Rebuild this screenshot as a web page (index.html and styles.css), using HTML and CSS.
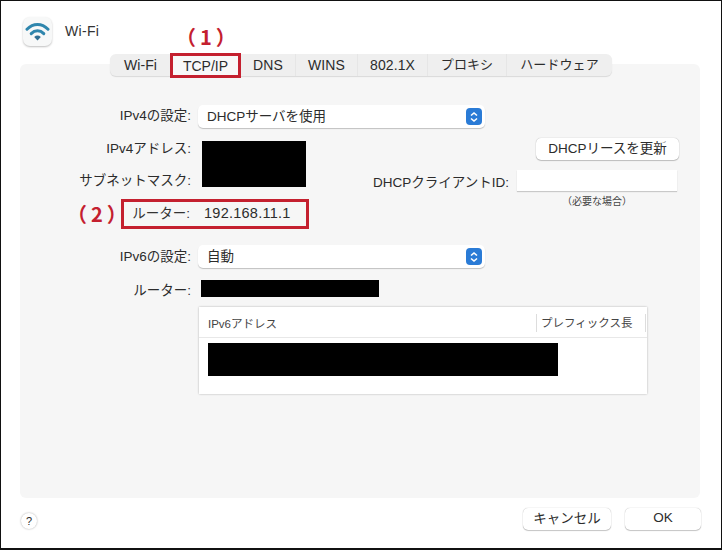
FILE: index.html
```html
<!DOCTYPE html>
<html lang="ja">
<head>
<meta charset="utf-8">
<title>Wi-Fi</title>
<link rel="stylesheet" href="styles.css">
</head>
<body>
<div class="window">
  <header class="header">
    <div class="app-icon">
      <svg width="25" height="21" viewBox="0 0 25 21" fill="none">
        <path d="M2 8.2C8.2 1.9 16.8 1.9 23 8.2" stroke="#2f86ad" stroke-width="3" stroke-linecap="round"/>
        <path d="M6.2 12.6C9.9 8.9 15.1 8.9 18.8 12.6" stroke="#2f86ad" stroke-width="3" stroke-linecap="round"/>
        <path d="M9.2 16C11.2 14.1 13.8 14.1 15.8 16L12.5 19.4Z" fill="#2f6f94"/>
      </svg>
    </div>
    <div class="title">Wi-Fi</div>
  </header>

  <nav class="tabs">
    <div class="tab tab-wifi">Wi-Fi</div>
    <div class="tab tab-active">TCP/IP<span class="note note-one">（1）</span></div>
    <div class="tab">DNS</div>
    <div class="tab">WINS</div>
    <div class="tab">802.1X</div>
    <div class="tab tab-cjk">プロキシ</div>
    <div class="tab tab-cjk tab-last">ハードウェア</div>
  </nav>

  <main class="panel">
    <div class="row row-v4">
      <div class="label">IPv4の設定:</div>
      <div class="select"><span class="select-text">DHCPサーバを使用</span><span class="stepper"><svg width="10" height="12" viewBox="0 0 10 12" fill="none"><path d="M2 4.5 5 2l3 2.5M2 7.5 5 10l3-2.5" stroke="#fff" stroke-width="1.6"/></svg></span></div>
    </div>

    <div class="v4-detail">
      <div class="v4-left">
        <div class="masked">
          <div class="masked-labels">
            <div class="label">IPv4アドレス:</div>
            <div class="label">サブネットマスク:</div>
          </div>
          <div class="redact redact-v4"></div>
        </div>
        <div class="router-box">
          <span class="note note-two">（2）</span>
          <div class="router-label">ルーター:</div>
          <div class="router-value">192.168.11.1</div>
        </div>
      </div>
      <div class="v4-right">
        <div class="button button-lease">DHCPリースを更新</div>
        <div class="client-row">
          <div class="client-label">DHCPクライアントID:</div>
          <div class="client-field"></div>
        </div>
        <div class="hint">（必要な場合）</div>
      </div>
    </div>

    <div class="row row-v6">
      <div class="label">IPv6の設定:</div>
      <div class="select"><span class="select-text">自動</span><span class="stepper"><svg width="10" height="12" viewBox="0 0 10 12" fill="none"><path d="M2 4.5 5 2l3 2.5M2 7.5 5 10l3-2.5" stroke="#fff" stroke-width="1.6"/></svg></span></div>
    </div>

    <div class="row row-router6">
      <div class="label">ルーター:</div>
      <div class="redact redact-router"></div>
    </div>

    <div class="table">
      <div class="table-head">
        <div class="col-address">IPv6アドレス</div>
        <div class="col-prefix">プレフィックス長</div>
      </div>
      <div class="redact redact-table"></div>
    </div>
  </main>

  <footer class="footer">
    <div class="help">?</div>
    <div class="footer-buttons">
      <div class="button button-cancel">キャンセル</div>
      <div class="button button-ok">OK</div>
    </div>
  </footer>
</div>
</body>
</html>
```
FILE: styles.css
```css
* { box-sizing: border-box; }
html, body { margin: 0; padding: 0; }
body {
  width: 722px;
  height: 550px;
  background: #fff;
  font-family: "Liberation Sans", "Noto Sans CJK JP", sans-serif;
  font-size: 13px;
  color: #2c2c2c;
}
.window {
  width: 722px;
  height: 550px;
  border: 1px solid #111;
  border-bottom-width: 2px;
  display: flex;
  flex-direction: column;
  background: #fff;
}
.header {
  height: 52px;
  padding: 16px 0 0 22px;
  display: flex;
  align-items: flex-start;
}
.app-icon {
  width: 29px;
  height: 29px;
  border-radius: 7px;
  background: #f7f8f8;
  box-shadow: 0 1px 2px rgba(0,0,0,.25);
  display: flex;
  align-items: center;
  justify-content: center;
}
.title {
  margin-left: 13px;
  margin-top: 5px;
  font-size: 14px;
  line-height: 18px;
  letter-spacing: .3px;
  color: #333;
}
.tabs {
  position: relative;
  z-index: 1;
  align-self: flex-start;
  margin-top: 1px;
  margin-left: 109px;
  margin-bottom: -12px;
  height: 22px;
  display: flex;
  background: #efefef;
  border-radius: 6px;
  box-shadow: 0 1px 1px rgba(0,0,0,.12);
}
.tab {
  position: relative;
  display: flex;
  align-items: center;
  justify-content: center;
  font-size: 14px;
  letter-spacing: .1px;
  color: #2c2c2c;
  border-right: 1px solid #e6e6e6;
  width: 56px;
}
.tab-cjk { font-size: 13px; padding-bottom: 3px; }
.tab-wifi { width: 61px; border-right: 0; }
.tab-active {
  width: 71px;
  height: 25px;
  margin: -1px -1px 0 -1px;
  border: 3px solid #c4202f;
  background: #f8f8f8;
  letter-spacing: 0;
}
.tab:nth-child(3) { width: 56px; padding-left: 1px; }
.tab:nth-child(4) { width: 62px; }
.tab:nth-child(5) { width: 70px; }
.tab:nth-child(6) { width: 79px; }
.tab-last { width: 105px; border-right: 0; }
.note {
  position: absolute;
  color: #c4202f;
  font-family: "Noto Sans CJK JP", sans-serif;
  font-weight: 700;
  font-size: 20px;
  line-height: 24px;
  letter-spacing: 4px;
  white-space: nowrap;
}
.note-one { left: 3px; top: -31px; }
.note-two { left: -57px; top: 0; }
.panel {
  width: 680px;
  height: 434px;
  margin-left: 19px;
  padding: 41px 0 0;
  background: #f6f6f6;
  border-radius: 6px;
}
.row { display: flex; align-items: center; }
.label {
  width: 171px;
  text-align: right;
  font-size: 13.5px;
  line-height: 18px;
  white-space: nowrap;
}
.row-v4 .label { margin-bottom: 2px; }
.select {
  width: 287px;
  height: 23px;
  margin-left: 7px;
  padding: 0 3px 0 9px;
  background: #fff;
  border-radius: 5px;
  box-shadow: 0 1px 1px rgba(0,0,0,.22);
  display: flex;
  align-items: center;
  justify-content: space-between;
  font-size: 13.5px;
}
.select-text { margin-bottom: 3px; }
.stepper {
  width: 16px;
  height: 17px;
  border-radius: 4px;
  background: #2a7bd6;
  display: flex;
  align-items: center;
  justify-content: center;
}
.v4-detail {
  display: flex;
  margin-top: 10px;
  height: 87px;
}
.v4-left { width: 289px; padding-top: 3px; }
.masked { display: flex; }
.masked-labels {
  display: flex;
  flex-direction: column;
  gap: 14px;
  margin-top: -1px;
}
.redact { background: #000; }
.redact-v4 { width: 104px; height: 46px; margin-left: 11px; }
.router-box {
  position: relative;
  margin: 9px 0 0 101px;
  width: 188px;
  height: 30px;
  border: 3px solid #c4202f;
  display: flex;
  align-items: center;
  font-size: 13.5px;
}
.router-label { width: 66px; margin-bottom: 4px; text-align: right; white-space: nowrap; color: #333; }
.router-value { margin-left: 14px; margin-bottom: 2px; white-space: nowrap; font-size: 14.5px; letter-spacing: .25px; }
.v4-right {
  width: 370px;
  display: flex;
  flex-direction: column;
  align-items: flex-end;
}
.button {
  background: #fff;
  border-radius: 5px;
  box-shadow: 0 0 1px rgba(0,0,0,.35), 0 1px 1px rgba(0,0,0,.2);
  display: flex;
  align-items: center;
  justify-content: center;
  padding-bottom: 4px;
  font-size: 13.5px;
}
.button-lease { width: 143px; height: 22px; }
.client-row {
  display: flex;
  align-items: center;
  margin-top: 10px;
  margin-right: 2px;
}
.client-label { font-size: 13.5px; white-space: nowrap; margin-right: 8px; }
.client-field {
  width: 160px;
  height: 21px;
  background: #fff;
  box-shadow: 0 1px 1px rgba(0,0,0,.18);
}
.hint {
  width: 160px;
  margin-right: 2px;
  margin-top: 4px;
  text-align: center;
  font-size: 10px;
  line-height: 14px;
  color: #444;
}
.row-v6 { margin-top: 20px; }
.row-router6 { margin-top: 12px; height: 17px; }
.row-router6 .label { margin-top: 4px; }
.redact-router { width: 178px; height: 17px; margin-left: 10px; }
.table {
  width: 448px;
  height: 87px;
  margin: 10px 0 0 179px;
  background: #fff;
  box-shadow: 0 0 2px rgba(0,0,0,.28);
}
.table-head {
  height: 31px;
  display: flex;
  align-items: center;
  border-bottom: 1px solid #e8e8e8;
  font-size: 11.5px;
  color: #444;
}
.col-address { width: 337px; padding-left: 9px; margin-top: 2px; }
.col-prefix {
  width: 110px;
  height: 18px;
  line-height: 18px;
  margin-top: 2px;
  padding-left: 4px;
  border-left: 1px solid #ddd;
  border-right: 1px solid #ddd;
  white-space: nowrap;
}
.redact-table { width: 350px; height: 33px; margin: 5px 0 0 9px; }
.footer {
  display: flex;
  align-items: flex-start;
  justify-content: space-between;
  padding: 10px 20px 0 20px;
}
.help {
  width: 16px;
  height: 16px;
  margin-top: 5px;
  border-radius: 50%;
  background: #fff;
  box-shadow: 0 0 2px rgba(0,0,0,.35);
  font-size: 11px;
  line-height: 16px;
  text-align: center;
}
.footer-buttons { display: flex; gap: 14px; }
.button-cancel { width: 88px; height: 22px; }
.button-ok { width: 76px; height: 22px; }
```
